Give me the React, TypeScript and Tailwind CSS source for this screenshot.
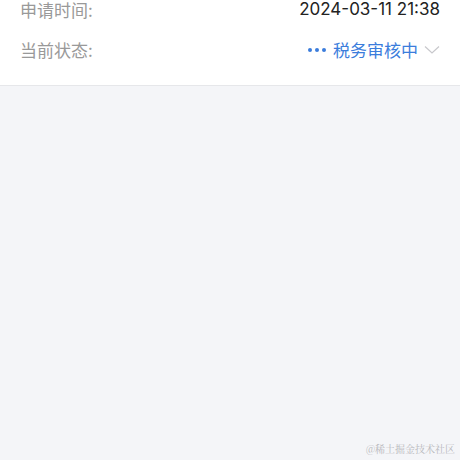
const App = () => {
    return (
        <div className="w-[460px] h-[460px] relative overflow-hidden bg-[#f4f5f8] font-['Noto_Sans_CJK_SC',sans-serif]">
            <div className="bg-white border-b border-[#e6e7ea] px-5 pb-[25px]">
                <div className="h-5 flex items-center justify-between">
                    <span className="text-[17px] text-[#999999]">申请时间:</span>
                    <span className="text-[17px] text-[#222222] font-['Inter',sans-serif]">2024-03-11 21:38</span>
                </div>
                <div className="mt-5 h-5 flex items-center justify-between">
                    <span className="text-[17px] text-[#999999]">当前状态:</span>
                    <span className="flex items-center text-[17px] text-[#3b7ddc]">
                        <span className="flex gap-[3px] mr-[7px]">
                            <span className="size-[4px] rounded-full bg-[#3b7ddc]" />
                            <span className="size-[4px] rounded-full bg-[#3b7ddc]" />
                            <span className="size-[4px] rounded-full bg-[#3b7ddc]" />
                        </span>
                        税务审核中
                        <svg className="ml-[6px]" width="16" height="10" viewBox="0 0 16 10" fill="none">
                            <path d="M1 1.5 L8 8 L15 1.5" stroke="#c8c8cc" strokeWidth="1.2" />
                        </svg>
                    </span>
                </div>
            </div>
            <span className="absolute right-[5px] bottom-[4px] text-[10px] text-[#b8b8bc] font-['Noto_Serif_CJK_SC','Noto_Sans_CJK_SC',serif]">
                @稀土掘金技术社区
            </span>
        </div>
    )
}

export default App
